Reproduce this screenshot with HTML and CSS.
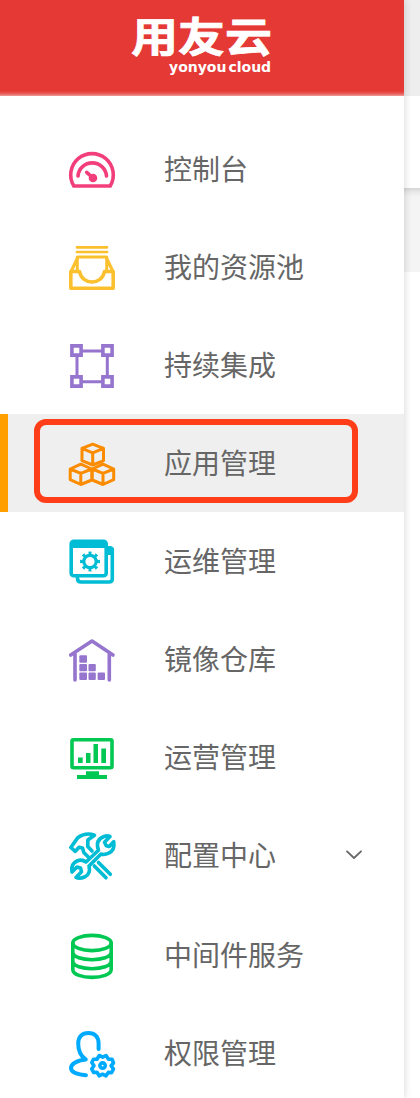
FILE: index.html
```html
<!DOCTYPE html>
<html lang="zh-CN">
<head>
<meta charset="utf-8">
<title>用友云</title>
<link rel="stylesheet" href="styles.css">
</head>
<body>
<div class="app">
  <aside class="sidebar">
    <header class="brand">
      <div class="brand-name">用友云</div>
      <div class="brand-sub"><span>yonyou</span><span>cloud</span></div>
    </header>
    <nav class="menu">
      <a class="item">
        <svg class="icon pink" viewBox="0 0 64 64"><path d="M13.8 49A21.3 21.3 0 1 1 50.2 49Z"/><path d="M18 39A14.3 14.3 0 0 1 46.5 39M26.7 35.3L33 41"/><circle class="solid" cx="33" cy="41" r="4.3"/></svg>
        <span class="label">控制台</span>
      </a>
      <a class="item">
        <svg class="icon yellow" viewBox="0 0 64 64"><path class="thin" d="M17 12.4H47M17 17H47"/><path class="medium" d="M17.3 36V22H46.7V36M17 24L11 36.5M47 24L53 36.5"/><path d="M10.8 36.5H19.5C22 50.5 42 50.5 44.5 36.5H53.2V53.2H10.8Z"/></svg>
        <span class="label">我的资源池</span>
      </a>
      <a class="item">
        <svg class="icon purple" viewBox="0 0 64 64"><path class="medium" d="M23 18H41M23 48.7H41M17 24V42M47.3 24V42"/><path class="square" d="M11.9 12.9H21.1V22.1H11.9ZM42.9 12.9H52.1V22.1H42.9ZM11.9 43.9H21.1V53.1H11.9ZM42.9 43.9H52.1V53.1H42.9Z"/></svg>
        <span class="label">持续集成</span>
      </a>
      <a class="item active">
        <svg class="icon orange" viewBox="0 0 64 64"><path class="medium" d="M32.7 13.2L43.5 17.4V29.7L32.7 34L22 29.7V17.4ZM22 17.4L32.7 21.8L43.5 17.4M32.7 21.8V34M20.8 33.2L31.8 38V49L20.8 53.5L10.2 48.7V38ZM10.2 38L20.8 42.3L31.8 38M20.8 42.3V53M43 33.2L53.7 38V48.7L43 53.5L32.3 49V38ZM32.3 38L43 42.3L53.7 38M43 42.3V53"/></svg>
        <span class="label">应用管理</span>
      </a>
      <a class="item">
        <svg class="icon cyan" viewBox="0 0 64 64"><rect x="11.2" y="12.3" width="35" height="34.5" rx="2.5"/><path class="solid" d="M11 12H46V19H11ZM46 17H50A3.5 3.5 0 0 1 53.5 20.5V26H46Z"/><path d="M17.5 47V49.5Q17.5 53 21 53H49Q52.3 53 52.3 50V20"/><circle cx="30" cy="32.5" r="6.2" class="gear-ring"/><circle cx="30" cy="32.5" r="8.4" class="gear-teeth" pathLength="80"/></svg>
        <span class="label">运维管理</span>
      </a>
      <a class="item">
        <svg class="icon purple" viewBox="0 0 64 64"><path d="M10.7 28L32 14L53 28M15 27V53M49.3 27V53"/><g class="solid"><rect x="19.3" y="28.3" width="7.7" height="7.5" rx="1"/><rect x="19.3" y="37" width="7.7" height="7.2" rx="1"/><rect x="28.5" y="37" width="7.3" height="7.2" rx="1"/><rect x="19.3" y="45.5" width="7.7" height="7.5" rx="1"/><rect x="28.5" y="45.5" width="7.3" height="7.5" rx="1"/><rect x="37.6" y="45.5" width="7.4" height="7.5" rx="1"/></g></svg>
        <span class="label">镜像仓库</span>
      </a>
      <a class="item">
        <svg class="icon green" viewBox="0 0 64 64"><rect x="12" y="14.8" width="40" height="28" rx="1.5"/><g class="solid"><path d="M18 32.5H22.7V38H18ZM26 28H30.5V38H26ZM33.5 19H38V38H33.5ZM41.3 23.5H46V38H41.3ZM26 46.3H39V50H47V54H17V50H26Z"/></g></svg>
        <span class="label">运营管理</span>
      </a>
      <a class="item">
        <svg class="icon cyan" viewBox="0 0 64 64"><path d="M10.8 24.5L18 14.4Q26 9 34.5 12.2L27.8 17V23.5L32 28M10.8 24.5L15.3 28.4L19 24.2L22.5 25L23.8 29.5L28.8 34.5M38.5 39.5L50.3 51.3M34.3 43L46 54.8"/><path d="M38.5 27.3Q34.8 17 44 13.5Q47.5 12.2 50 13.6L44.5 19.2L46.2 22.7L49.2 23.5L53.7 18.6Q55.2 27 48.7 30.2Q44.7 32.2 41 31L29 43Q31 51 24.6 54Q19.5 56.4 16 54.4L21.5 48.7L20.5 45L17 44L12 49Q10.4 41 17 38Q21.6 35.8 26 39Z"/></svg>
        <span class="label">配置中心</span>
        <svg class="chevron" viewBox="0 0 20 12"><path d="M3 2.3L10 9L17 2.3"/></svg>
      </a>
      <a class="item spaced">
        <svg class="icon green" viewBox="0 0 64 64"><ellipse cx="32" cy="20" rx="19.2" ry="7.6"/><path d="M12.8 20V46.5C13 57 51 57 51.2 46.5V20M12.8 29C13 39.3 51 39.3 51.2 29M12.8 38C13 48.3 51 48.3 51.2 38"/></svg>
        <span class="label">中间件服务</span>
      </a>
      <a class="item">
        <svg class="icon blue" viewBox="0 0 64 64"><path class="bold" d="M38.6 28V22.5C38.6 15.5 34.5 12 28.4 12C22.3 12 18.2 15.5 18.2 22.5C18.2 30 20.5 35 25.8 38.5C16 39.5 11 43.5 11 47C11 51.5 18 53.5 26 54.2"/><path d="M39.3 34.5L42.7 36.1L46 34.5L48.5 38.3L52 38.3L53.5 42L51.1 44.7L53.5 48L51.6 51.6L48.3 51.4L46 54.8L42.6 53.2L39.2 54.8L37 51.3L33.7 51.5L31.7 48L34 44.7L31.8 41.5L33.5 38.2L37 38.3Z"/><circle cx="42.6" cy="44.6" r="2.7"/></svg>
        <span class="label">权限管理</span>
      </a>
    </nav>
  </aside>
  <main class="content">
    <div class="topbar"></div>
    <div class="toolbar"></div>
    <div class="subbar"></div>
  </main>
  <div class="highlight"></div>
</div>
</body>
</html>
```

FILE: styles.css
```css
* { box-sizing: border-box; }
body { margin: 0; font-family: "Noto Sans CJK SC", sans-serif; }
.app { position: relative; display: flex; width: 420px; height: 1098px; overflow: hidden; background: #fff; }
.sidebar { z-index: 1; width: 404px; flex: none; background: #fff; box-shadow: 0 0 8px rgba(0,0,0,.18); }
.brand { height: 96px; padding: 12px 0 0 131px; color: #fff; background: linear-gradient(#e53935 91px, #e9635f 94px, #efa19f 96px); }
.brand-name { height: 47px; font-size: 47px; line-height: 49px; font-weight: 700; white-space: nowrap; transform: scaleY(.88); transform-origin: top; -webkit-text-stroke: .8px #fff; }
.brand-sub { display: flex; gap: 2px; margin-left: 38px; font: 700 14px/16px "DejaVu Sans", sans-serif; }
.menu { padding-top: 24px; }
.item { display: flex; align-items: center; height: 98px; padding-left: 60px; color: #666; }
.spaced { margin-top: 2px; }
.active { padding-left: 52px; border-left: 8px solid #ffa000; background: #efefef; }
.icon { width: 64px; height: 64px; margin-right: 40px; flex: none; }
.icon, .chevron { fill: none; stroke: currentColor; stroke-width: 3.6; stroke-linecap: round; stroke-linejoin: round; }
.icon .solid { fill: currentColor; stroke: none; }
.icon .thin { stroke-width: 2.7; }
.icon .medium { stroke-width: 3; }
.icon .bold { stroke-width: 4; }
.icon .square { stroke-linejoin: miter; }
.icon .gear-ring { stroke-width: 3.2; }
.icon .gear-teeth { stroke-width: 3.2; stroke-linecap: butt; stroke-dasharray: 4.5 5.5; stroke-dashoffset: 2.25; }
.label { padding-bottom: 2px; font-size: 28px; line-height: 40px; white-space: nowrap; }
.chevron { width: 20px; height: 12px; margin-left: 68px; stroke-width: 1.8; color: #666; }
.pink { color: #f23f7c; }
.yellow { color: #fbc02d; }
.purple { color: #9575cd; }
.orange { color: #fb8c00; }
.cyan { color: #00bcd4; }
.green { color: #00c853; }
.blue { color: #03a9f4; }
.item .blue { color: #00aaff; }
.content { flex: 1; }
.topbar { height: 96px; background: #eee; }
.toolbar { height: 92px; background: #fff; }
.subbar { height: 84px; background: linear-gradient(#d5d5d5, #e8e8e8 4px, #f4f4f4 9px); }
.highlight { position: absolute; z-index: 2; left: 34px; top: 419px; width: 324px; height: 84px; border: 6px solid #ff3d19; border-radius: 12px; }
```
